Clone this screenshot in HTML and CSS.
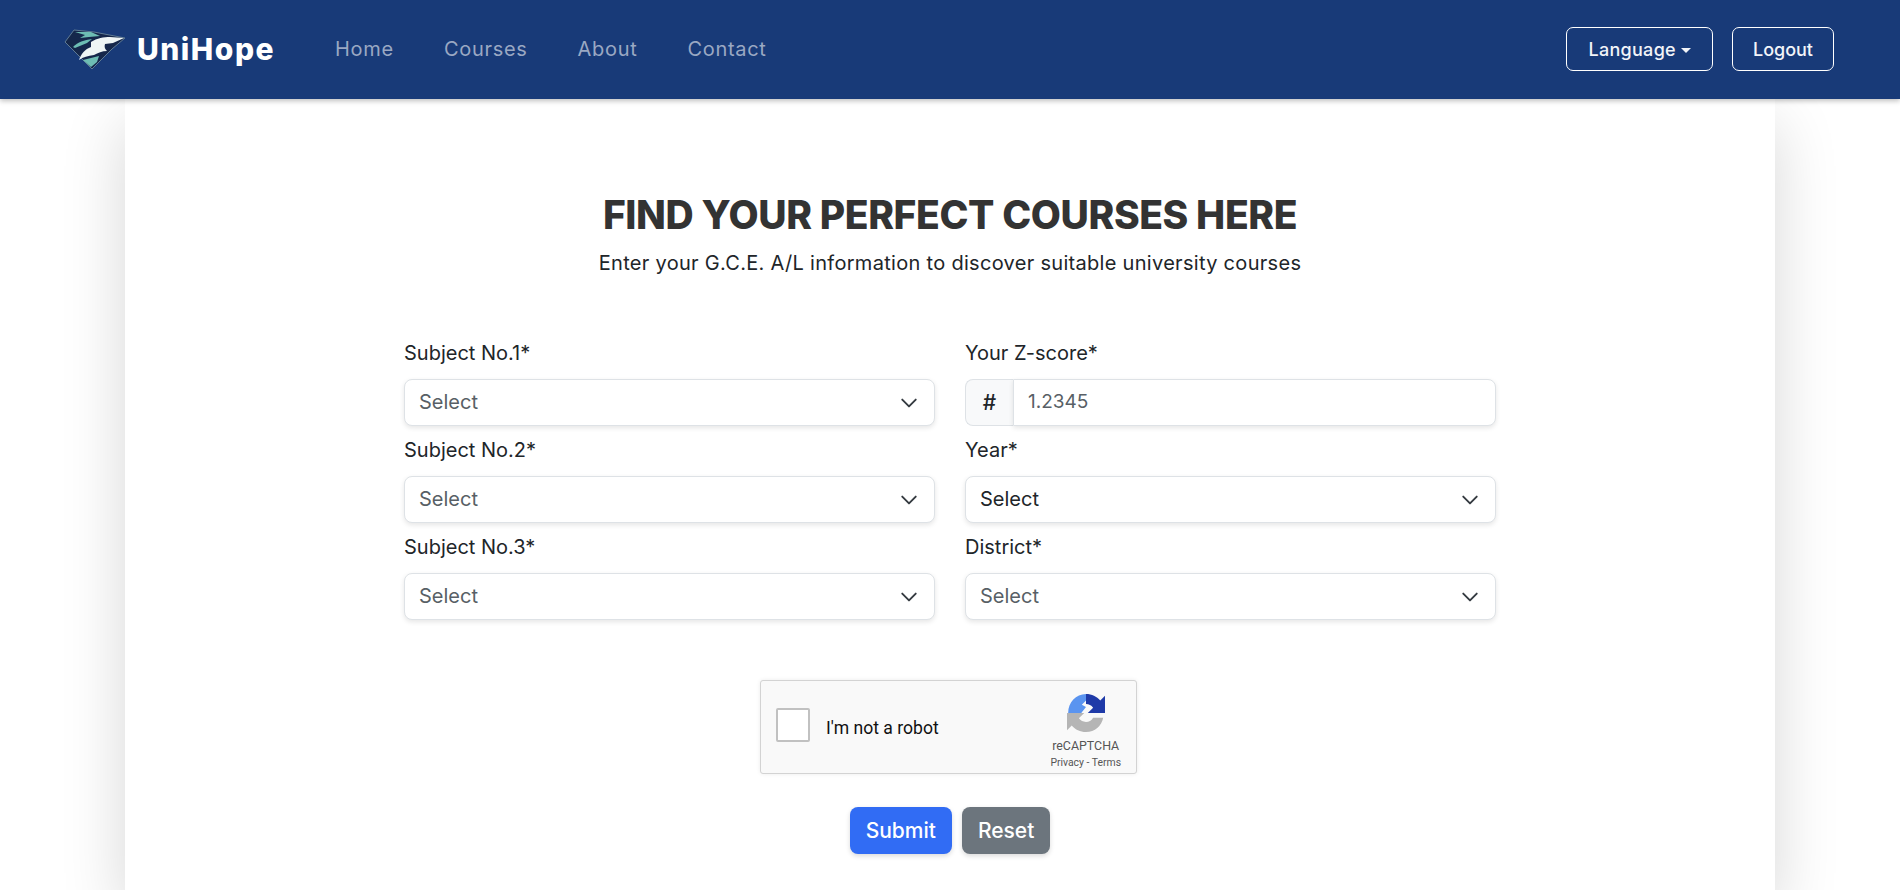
FILE: index.html
```html
<!DOCTYPE html>
<html lang="en">
<head>
    <meta charset="UTF-8">
    <meta name="viewport" content="width=device-width, initial-scale=1.0">
    <title>UniHope</title>
    <link rel="stylesheet" href="styles.css">
</head>
<body>
    <nav class="navbar">
        <a class="brand" href="#">
            <svg class="brand-logo" viewBox="0 0 62 41" width="62" height="41">
                <path d="M1 13 10 1 30 3 61 9 48 20 28 40Z" fill="#15274b" stroke="#5f7b94" stroke-width="1" stroke-linejoin="round"/>
                <path d="M11 3 27 3 36 7 25 8 16 9 21 6Z" fill="#6dbdb4"/>
                <path d="M9 18C14 13 20 11 28 10L23 14 11 19Z" fill="#6dbdb4"/>
                <path d="M27 13C33 9 40 8 46 8L60 9 49 14 41 15C40 18 41 20 43 22 38 22 34 24 30 26 24 27 19 28 15 31 17 25 21 20 27 18Z" fill="#eef5f5"/>
                <path d="M19 31 35 27 33 33 27 38Z" fill="#6dbdb4"/>
            </svg>
            <span>UniHope</span>
        </a>
        <ul class="nav-links">
            <li><a href="#">Home</a></li>
            <li><a href="#">Courses</a></li>
            <li><a href="#">About</a></li>
            <li><a href="#">Contact</a></li>
        </ul>
        <div class="nav-actions">
            <button class="btn-outline dropdown-toggle">Language</button>
            <button class="btn-outline">Logout</button>
        </div>
    </nav>

    <main class="card">
        <h1>FIND YOUR PERFECT COURSES HERE</h1>
        <p class="lead">Enter your G.C.E. A/L information to discover suitable university courses</p>

        <form class="course-form">
            <div class="field">
                <label for="sub1">Subject No.1*</label>
                <select id="sub1" class="muted"><option>Select</option></select>
            </div>
            <div class="field">
                <label for="zscore">Your Z-score*</label>
                <div class="input-group">
                    <span class="input-prefix">#</span>
                    <input id="zscore" type="text" placeholder="1.2345">
                </div>
            </div>
            <div class="field">
                <label for="sub2">Subject No.2*</label>
                <select id="sub2" class="muted"><option>Select</option></select>
            </div>
            <div class="field">
                <label for="year">Year*</label>
                <select id="year"><option>Select</option></select>
            </div>
            <div class="field">
                <label for="sub3">Subject No.3*</label>
                <select id="sub3" class="muted"><option>Select</option></select>
            </div>
            <div class="field">
                <label for="district">District*</label>
                <select id="district" class="muted"><option>Select</option></select>
            </div>
        </form>

        <div class="captcha">
            <span class="captcha-box"></span>
            <span class="captcha-text">I'm not a robot</span>
            <div class="captcha-brand">
                <svg viewBox="0 0 64 64" width="38" height="38">
                    <path d="M32 0C42 0 50 4 56 11L64 3V32H35L44 23C41 19 37 17 32 17Z" fill="#1f3aa8"/>
                    <path d="M2 32C2 14 15 0 32 0V11L25 18 32 22 24 32Z" fill="#5a94f0"/>
                    <path d="M0 32H29L20 41C23 45 27 47 32 47 37 47 41 45 44 40H61C58 54 47 64 32 64 22 64 14 60 8 53L0 61Z" fill="#b5b5b5"/>
                </svg>
                <span class="captcha-name">reCAPTCHA</span>
                <span class="captcha-links">Privacy - Terms</span>
            </div>
        </div>

        <div class="form-buttons">
            <button class="btn btn-primary">Submit</button>
            <button class="btn btn-secondary">Reset</button>
        </div>
    </main>
</body>
</html>
```

FILE: styles.css
```css
* {
    box-sizing: border-box;
}
html, body {
    height: 100%;
}
body {
    margin: 0;
    display: flex;
    flex-direction: column;
    overflow: hidden;
    background: #fff;
    color: #212529;
    font-family: Inter, "Open Sans", sans-serif;
}
.navbar {
    position: relative;
    z-index: 2;
    flex: none;
    height: 99px;
    padding: 0 66px 1px 64px;
    display: flex;
    align-items: center;
    background: #183a78;
    box-shadow: 0 2px 5px rgba(0, 0, 0, 0.25);
}
.brand {
    display: flex;
    align-items: center;
    gap: 11px;
    color: #fff;
    font-size: 30px;
    font-weight: 800;
    letter-spacing: 1.5px;
    text-decoration: none;
}
.brand-logo {
    display: block;
}
.nav-links {
    display: flex;
    gap: 50px;
    margin: 0 auto 0 60px;
    padding: 0;
    list-style: none;
}
.nav-links a {
    color: #9aa8c3;
    font-size: 20px;
    letter-spacing: 0.7px;
    text-decoration: none;
}
.nav-actions {
    display: flex;
    gap: 19px;
}
.btn-outline {
    height: 44px;
    padding: 0 20px;
    border: 1px solid #fff;
    border-radius: 7px;
    background: transparent;
    color: #f2f4f8;
    font: 500 18px Inter, sans-serif;
}
.dropdown-toggle {
    padding: 0 21px;
    letter-spacing: 0.3px;
}
.dropdown-toggle::after {
    content: "";
    display: inline-block;
    margin-left: 5px;
    vertical-align: 3px;
    border-top: 5px solid;
    border-left: 5px solid transparent;
    border-right: 5px solid transparent;
}
.card {
    flex: 1;
    width: 1650px;
    margin: 0 auto;
    padding-top: 91px;
    background: #fff;
    box-shadow: 0 25px 60px rgba(0, 0, 0, 0.16);
}
h1 {
    margin: 0;
    color: #333;
    font-size: 39px;
    font-weight: 800;
    letter-spacing: -0.4px;
    line-height: 50px;
    text-align: center;
}
.lead {
    margin: 8px 0 0;
    font-size: 20px;
    letter-spacing: 0.3px;
    line-height: 30px;
    text-align: center;
}
.course-form {
    width: 1092px;
    margin: 62px auto 0;
    display: grid;
    grid-template-columns: 1fr 1fr;
    column-gap: 30px;
    row-gap: 11px;
}
.field label {
    display: block;
    margin-bottom: 12px;
    font-size: 20px;
    line-height: 27px;
}
select, input {
    display: block;
    width: 100%;
    height: 47px;
    padding: 0 14px 2px;
    border: 1px solid #dee2e6;
    border-radius: 8px;
    background-color: #fff;
    color: #212529;
    font: 20px Inter, sans-serif;
    box-shadow: 0 2px 5px rgba(0, 0, 0, 0.1);
    outline: none;
}
select {
    appearance: none;
    background-image: url("data:image/svg+xml,%3csvg xmlns='http://www.w3.org/2000/svg' viewBox='0 0 16 16'%3e%3cpath fill='none' stroke='%23343a40' stroke-linecap='round' stroke-linejoin='round' stroke-width='1.7' d='m2 5 6 6 6-6'/%3e%3c/svg%3e");
    background-repeat: no-repeat;
    background-position: right 16px center;
    background-size: 18px 18px;
}
select.muted {
    color: #585f66;
}
input {
    font-size: 19px;
}
input::placeholder {
    color: #585f66;
    opacity: 1;
}
.input-group {
    display: flex;
}
.input-prefix {
    flex: none;
    width: 48px;
    height: 47px;
    display: flex;
    align-items: center;
    justify-content: center;
    border: 1px solid #dee2e6;
    border-right: none;
    border-radius: 8px 0 0 8px;
    background: #f8f9fa;
    font-size: 21px;
    font-weight: 500;
}
.input-group input {
    border-radius: 0 8px 8px 0;
}
.captcha {
    width: 377px;
    height: 94px;
    margin: 60px 0 0 635px;
    padding: 0 15px;
    display: flex;
    align-items: center;
    border: 1px solid #d3d3d3;
    border-radius: 3px;
    background: #f9f9f9;
    box-shadow: 0 0 4px rgba(0, 0, 0, 0.08);
    font-family: Roboto, sans-serif;
}
.captcha-box {
    width: 34px;
    height: 34px;
    margin-bottom: 4px;
    border: 2px solid #c1c1c1;
    border-radius: 2px;
    background: #fff;
}
.captcha-text {
    margin: 1px 0 0 16px;
    color: #111;
    font-size: 17.6px;
}
.captcha-brand {
    margin-left: auto;
    padding-top: 8px;
    display: flex;
    flex-direction: column;
    align-items: center;
    color: #555;
}
.captcha-name {
    margin-top: 6px;
    font-size: 12.4px;
}
.captcha-links {
    margin-top: 3px;
    font-size: 10.4px;
}
.form-buttons {
    margin-top: 33px;
    display: flex;
    justify-content: center;
    gap: 10px;
}
.btn {
    height: 47px;
    padding: 0 16px;
    border: none;
    border-radius: 8px;
    color: #fff;
    font: 500 21px Inter, sans-serif;
    box-shadow: 0 2px 5px rgba(0, 0, 0, 0.15);
}
.btn-primary {
    background: #316cf4;
}
.btn-secondary {
    background: #6c757d;
}
```
